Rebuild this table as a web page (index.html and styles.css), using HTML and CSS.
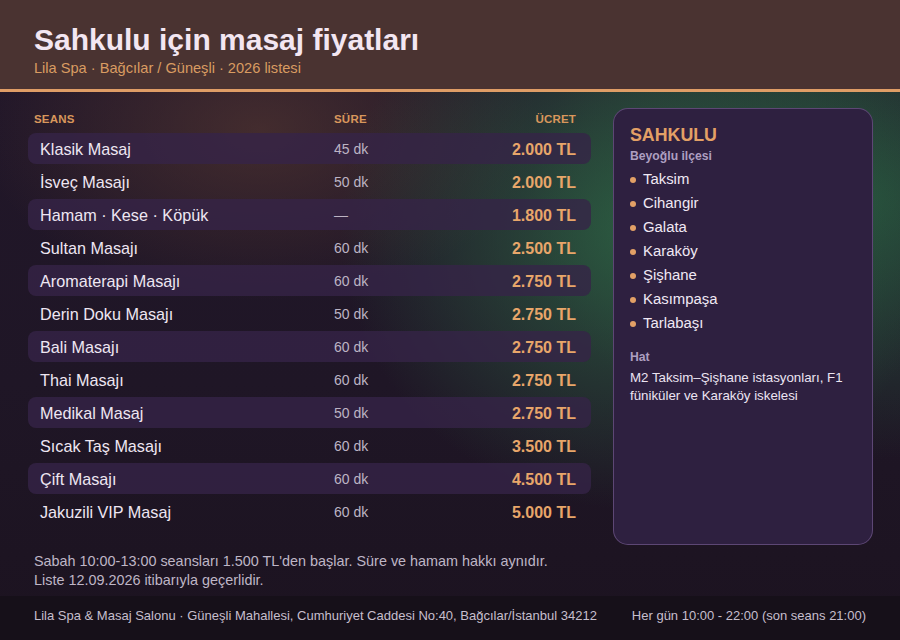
FILE: index.html
```html
<!DOCTYPE html>
<html lang="tr">
<head>
<meta charset="utf-8">
<title>Sahkulu için masaj fiyatları</title>
<link rel="stylesheet" href="styles.css">
</head>
<body>
<div class="page">
  <header class="top">
    <h1 class="title">Sahkulu için masaj fiyatları</h1>
    <div class="subtitle">Lila Spa · Bağcılar / Güneşli · 2026 listesi</div>
  </header>
  <main class="main">
    <section class="prices">
      <div class="thead">
        <span class="c-name">SEANS</span>
        <span class="c-dur">SÜRE</span>
        <span class="c-price">ÜCRET</span>
      </div>
      <div class="row alt"><span class="c-name">Klasik Masaj</span><span class="c-dur">45 dk</span><span class="c-price">2.000 TL</span></div>
      <div class="row"><span class="c-name">İsveç Masajı</span><span class="c-dur">50 dk</span><span class="c-price">2.000 TL</span></div>
      <div class="row alt"><span class="c-name">Hamam · Kese · Köpük</span><span class="c-dur">—</span><span class="c-price">1.800 TL</span></div>
      <div class="row"><span class="c-name">Sultan Masajı</span><span class="c-dur">60 dk</span><span class="c-price">2.500 TL</span></div>
      <div class="row alt"><span class="c-name">Aromaterapi Masajı</span><span class="c-dur">60 dk</span><span class="c-price">2.750 TL</span></div>
      <div class="row"><span class="c-name">Derin Doku Masajı</span><span class="c-dur">50 dk</span><span class="c-price">2.750 TL</span></div>
      <div class="row alt"><span class="c-name">Bali Masajı</span><span class="c-dur">60 dk</span><span class="c-price">2.750 TL</span></div>
      <div class="row"><span class="c-name">Thai Masajı</span><span class="c-dur">60 dk</span><span class="c-price">2.750 TL</span></div>
      <div class="row alt"><span class="c-name">Medikal Masaj</span><span class="c-dur">50 dk</span><span class="c-price">2.750 TL</span></div>
      <div class="row"><span class="c-name">Sıcak Taş Masajı</span><span class="c-dur">60 dk</span><span class="c-price">3.500 TL</span></div>
      <div class="row alt"><span class="c-name">Çift Masajı</span><span class="c-dur">60 dk</span><span class="c-price">4.500 TL</span></div>
      <div class="row"><span class="c-name">Jakuzili VIP Masaj</span><span class="c-dur">60 dk</span><span class="c-price">5.000 TL</span></div>
    </section>
    <aside class="card">
      <h2 class="card-title">SAHKULU</h2>
      <div class="card-sub">Beyoğlu ilçesi</div>
      <ul class="areas">
        <li>Taksim</li>
        <li>Cihangir</li>
        <li>Galata</li>
        <li>Karaköy</li>
        <li>Şişhane</li>
        <li>Kasımpaşa</li>
        <li>Tarlabaşı</li>
      </ul>
      <div class="card-label">Hat</div>
      <p class="card-text">M2 Taksim–Şişhane istasyonları, F1 füniküler ve Karaköy iskelesi</p>
    </aside>
  </main>
  <div class="notes">
    <p>Sabah 10:00-13:00 seansları 1.500 TL'den başlar. Süre ve hamam hakkı aynıdır.</p>
    <p>Liste 12.09.2026 itibarıyla geçerlidir.</p>
  </div>
  <footer class="foot">
    <span>Lila Spa &amp; Masaj Salonu · Güneşli Mahallesi, Cumhuriyet Caddesi No:40, Bağcılar/İstanbul 34212</span>
    <span>Her gün 10:00 - 22:00 (son seans 21:00)</span>
  </footer>
</div>
</body>
</html>
```

FILE: styles.css
```css
* { box-sizing: border-box; }
html, body { margin: 0; padding: 0; }
body {
  width: 900px;
  height: 640px;
  overflow: hidden;
  font-family: "Liberation Sans", Arial, sans-serif;
  color: #ece4f0;
  background: #1c1320;
}
.page {
  width: 900px;
  height: 640px;
  display: flex;
  flex-direction: column;
  background:
    radial-gradient(ellipse 300px 280px at 640px 230px, rgba(45, 100, 68, 0.85), rgba(45, 100, 68, 0) 100%),
    radial-gradient(ellipse 330px 260px at 860px 200px, rgba(40, 92, 64, 0.8), rgba(40, 92, 64, 0) 100%),
    radial-gradient(ellipse 280px 170px at 260px 130px, rgba(90, 58, 50, 0.6), rgba(90, 58, 50, 0) 100%),
    linear-gradient(180deg, #22172a 0%, #1f1626 60%, #1c1320 100%);
}
.top {
  background: #4a3331;
  height: 92px;
  padding: 23px 34px 0;
  border-bottom: 3px solid #df9d66;
}
.title {
  margin: 0;
  font-size: 30px;
  line-height: 33px;
  font-weight: 700;
  color: #f3e6f1;
}
.subtitle {
  margin-top: 3px;
  font-size: 14.6px;
  line-height: 18px;
  color: #d99c62;
}
.main {
  display: flex;
  gap: 22px;
  padding: 16px 27px 0 28px;
  height: 453px;
}
.prices {
  width: 563px;
  display: flex;
  flex-direction: column;
  gap: 2px;
}
.thead, .row {
  display: grid;
  grid-template-columns: 294px 1fr 120px;
  align-items: center;
  padding: 0 15px 0 12px;
}
.thead {
  grid-template-columns: 300px 1fr 120px;
  height: 21px;
  margin-bottom: 2px;
  padding-left: 6px;
  font-size: 11.5px;
  font-weight: 700;
  color: #d9975c;
  letter-spacing: 0.2px;
}
.row {
  height: 31px;
  padding-top: 2px;
  border-radius: 8px;
  font-size: 16.2px;
}
.row.alt { background: rgba(54, 36, 72, 0.78); }
.c-name { color: #eee6f2; }
.thead .c-name { color: #d9975c; }
.c-dur {
  font-size: 14px;
  color: #bdb4c4;
}
.row .c-dur { padding-bottom: 2px; }
.thead .c-dur { font-size: 11.5px; color: #d9975c; }
.c-price {
  text-align: right;
  font-weight: 700;
  font-size: 16px;
  color: #e8a66a;
}
.thead .c-price { color: #d9975c; font-size: 11.5px; }
.card {
  width: 260px;
  height: 437px;
  background: #2e2040;
  border: 1px solid rgba(140, 110, 170, 0.5);
  border-radius: 15px;
  padding: 14px 16px 0 16px;
}
.card-title {
  margin: 0;
  font-size: 17.8px;
  line-height: 24px;
  font-weight: 700;
  color: #e3a066;
}
.card-sub {
  font-size: 12.2px;
  line-height: 16px;
  font-weight: 700;
  color: #ad9fc0;
  margin-top: 1px;
}
.areas {
  list-style: none;
  margin: 3px 0 0;
  padding: 0;
}
.areas li {
  display: flex;
  align-items: center;
  gap: 7px;
  height: 24px;
  font-size: 14.9px;
  color: #f0e8f4;
}
.areas li::before {
  content: "";
  width: 6px;
  height: 6px;
  border-radius: 50%;
  background: #e2a066;
  margin-top: 2px;
}
.card-label {
  margin-top: 14px;
  font-size: 12.2px;
  line-height: 16px;
  font-weight: 700;
  color: #ad9fc0;
}
.card-text {
  margin: 4px 0 0;
  font-size: 13.3px;
  line-height: 18px;
  color: #ece4f2;
}
.notes {
  padding: 7px 34px 0;
  height: 51px;
}
.notes p {
  margin: 0;
  font-size: 14.4px;
  line-height: 19px;
  color: #bfb6c6;
}
.foot {
  flex: 1;
  display: flex;
  justify-content: space-between;
  align-items: center;
  padding: 0 34px 6px;
  background: #161019;
  font-size: 13px;
  color: #c6bfcd;
}
```
